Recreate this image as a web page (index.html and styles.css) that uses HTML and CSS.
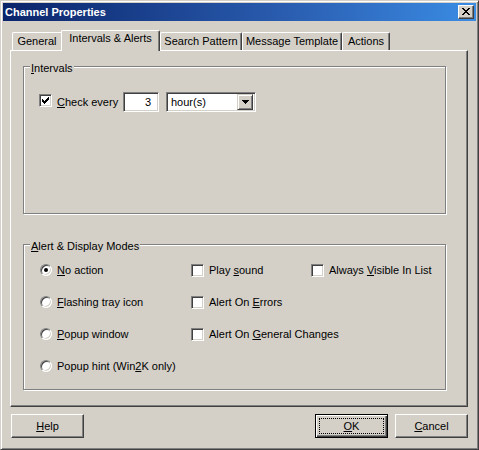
FILE: index.html
```html
<!DOCTYPE html>
<html>
<head>
<meta charset="utf-8">
<title>Channel Properties</title>
<link rel="stylesheet" href="styles.css">
</head>
<body>
<div class="window">
  <div class="titlebar">
    <span class="title">Channel Properties</span>
    <span class="close-btn">
      <svg width="8" height="7" viewBox="0 0 8 7" shape-rendering="crispEdges"><path d="M0 0h2v1H0zM6 0h2v1H6zM1 1h2v1H1zM5 1h2v1H5zM2 2h4v1H2zM3 3h2v1H3zM2 4h4v1H2zM1 5h2v1H1zM5 5h2v1H5zM0 6h2v1H0zM6 6h2v1H6z" fill="#000"/></svg>
    </span>
  </div>
  <div class="client">
    <div class="tabs">
      <div class="tab tab-general tab-before-active">General</div>
      <div class="tab tab-active tab-intervals">Intervals &amp; Alerts</div>
      <div class="tab tab-search">Search Pattern</div>
      <div class="tab tab-message">Message Template</div>
      <div class="tab tab-actions">Actions</div>
    </div>
    <div class="panel">
      <div class="group group-intervals">
        <span class="group-title"><u>I</u>ntervals</span>
        <div class="check-row">
          <span class="checkbox">
            <svg width="7" height="7" viewBox="0 0 7 7" shape-rendering="crispEdges"><path d="M0 2h1v3H0zM1 3h1v3H1zM2 4h1v3H2zM3 3h1v3H3zM4 2h1v3H4zM5 1h1v3H5zM6 0h1v3H6z" fill="#000"/></svg>
          </span>
          <span class="check-label"><u>C</u>heck every</span>
          <span class="field num-field">3</span>
          <span class="field combo">
            <span class="combo-text">hour(s)</span>
            <span class="combo-btn">
              <svg width="7" height="4" viewBox="0 0 7 4" shape-rendering="crispEdges"><path d="M0 0h7v1H0zM1 1h5v1H1zM2 2h3v1H2zM3 3h1v1H3z" fill="#000"/></svg>
            </span>
          </span>
        </div>
      </div>
      <div class="group group-alerts">
        <span class="group-title"><u>A</u>lert &amp; Display Modes</span>
        <div class="alert-grid">
          <div class="opt"><span class="radio checked"></span><span class="opt-label"><u>N</u>o action</span></div>
          <div class="opt"><span class="box"></span><span class="opt-label">Play <u>s</u>ound</span></div>
          <div class="opt"><span class="box"></span><span class="opt-label">Always <u>V</u>isible In List</span></div>

          <div class="opt"><span class="radio"></span><span class="opt-label"><u>F</u>lashing tray icon</span></div>
          <div class="opt"><span class="box"></span><span class="opt-label">Alert On <u>E</u>rrors</span></div>
          <div class="opt empty"></div>

          <div class="opt"><span class="radio"></span><span class="opt-label"><u>P</u>opup window</span></div>
          <div class="opt"><span class="box"></span><span class="opt-label">Alert On <u>G</u>eneral Changes</span></div>
          <div class="opt empty"></div>

          <div class="opt"><span class="radio"></span><span class="opt-label">Popup hint (Win<u>2</u>K only)</span></div>
        </div>
      </div>
    </div>
    <div class="buttons">
      <div class="btn btn-help"><span><u>H</u>elp</span></div>
      <div class="btn btn-ok btn-default"><span><u>O</u>K</span></div>
      <div class="btn btn-cancel"><span><u>C</u>ancel</span></div>
    </div>
  </div>
</div>
</body>
</html>
```

FILE: styles.css
```css
* { box-sizing: border-box; }
html, body { margin: 0; padding: 0; }
body {
  width: 479px;
  height: 450px;
  overflow: hidden;
  background: #d4d0c8;
  font-family: "Liberation Sans", Arial, sans-serif;
  font-size: 11px;
  line-height: 13px;
  color: #000;
}
u { text-decoration: underline; text-underline-offset: 1px; }

.window {
  width: 479px;
  height: 450px;
  background: #d4d0c8;
  border: 1px solid;
  border-color: #d4d0c8 #404040 #404040 #d4d0c8;
  box-shadow: inset 1px 1px #fff, inset -1px -1px #808080;
  padding: 2px;
  display: flex;
  flex-direction: column;
}

.titlebar {
  height: 18px;
  flex: none;
  display: flex;
  align-items: center;
  padding-left: 2px;
  background: linear-gradient(to right, #0a246a 0%, #2a5db0 60%, #3a8ce4 100%);
}
.title {
  color: #fff;
  font-weight: bold;
  font-size: 11px;
}
.close-btn {
  margin-left: auto;
  margin-right: 2px;
  width: 16px;
  height: 14px;
  background: #d4d0c8;
  border: 1px solid;
  border-color: #fff #404040 #404040 #fff;
  box-shadow: inset -1px -1px #808080;
  display: flex;
  align-items: center;
  justify-content: center;
  padding: 0 0 1px 0;
}
.close-btn svg { display: block; }

.client {
  flex: 1;
  padding: 9px 8px 0 7px;
  display: flex;
  flex-direction: column;
}

.tabs {
  display: flex;
  align-items: flex-end;
  height: 20px;
  padding-left: 2px;
  position: relative;
  z-index: 2;
}
.tab {
  height: 18px;
  border-top: 1px solid #fff;
  border-left: 1px solid #fff;
  border-right: 1px solid #404040;
  box-shadow: inset -1px 0 #808080;
  border-top-left-radius: 2px;
  border-top-right-radius: 2px;
  text-align: center;
  padding-top: 2px;
  white-space: nowrap;
  background: #d4d0c8;
}
.tab-before-active { border-right: 0; box-shadow: none; border-top-right-radius: 0; }
.tab-general { width: 49px; }
.tab-intervals { width: 99px; }
.tab-search { width: 82px; }
.tab-message { width: 100px; }
.tab-actions { width: 48px; }
.tab-active {
  height: 21px;
  margin-bottom: -1px;
  padding-top: 1px;
}

.panel {
  width: 458px;
  height: 357px;
  flex: none;
  border: 1px solid;
  border-color: #fff #404040 #404040 #fff;
  box-shadow: inset -1px -1px #808080;
  padding: 15px 21px 0 12px;
  position: relative;
  z-index: 1;
}

.group {
  position: relative;
  border: 1px solid #808080;
  box-shadow: inset 1px 1px #fff, 1px 1px #fff;
}
.group-title {
  position: absolute;
  top: -5px;
  left: 6px;
  padding: 0 1px;
  background: #d4d0c8;
  white-space: nowrap;
}
.group-intervals {
  height: 148px;
  padding: 25px 0 0 15px;
}
.group-alerts {
  height: 146px;
  margin-top: 30px;
  padding: 9px 0 0 16px;
}

.check-row {
  display: flex;
  align-items: center;
  height: 20px;
}
.checkbox, .box {
  width: 13px;
  height: 13px;
  flex: none;
  background: #fff;
  border: 1px solid;
  border-color: #808080 #fff #fff #808080;
  box-shadow: inset 1px 1px #404040, inset -1px -1px #d4d0c8;
  display: flex;
  align-items: center;
  justify-content: center;
}
.checkbox { margin-top: -3px; }
.checkbox svg { display: block; }
.check-label {
  width: 66px;
  margin-left: 5px;
  white-space: nowrap;
}
.field {
  height: 20px;
  background: #fff;
  border: 1px solid;
  border-color: #808080 #fff #fff #808080;
  box-shadow: inset 1px 1px #404040, inset -1px -1px #d4d0c8;
}
.num-field {
  width: 36px;
  text-align: right;
  padding: 3px 7px 0 0;
}
.combo {
  width: 90px;
  margin-left: 7px;
  display: flex;
  align-items: center;
  padding: 2px;
}
.combo-text {
  flex: 1;
  padding-left: 2px;
}
.combo-btn {
  width: 16px;
  height: 16px;
  background: #d4d0c8;
  border: 1px solid;
  border-color: #d4d0c8 #404040 #404040 #d4d0c8;
  box-shadow: inset 1px 1px #fff, inset -1px -1px #808080;
  display: flex;
  align-items: center;
  justify-content: center;
}
.combo-btn svg { display: block; }

.alert-grid {
  display: grid;
  grid-template-columns: 151px 120px auto;
  grid-auto-rows: 32px;
}
.opt {
  display: flex;
  align-items: center;
  white-space: nowrap;
}
.radio {
  width: 12px;
  height: 12px;
  flex: none;
  border-radius: 50%;
  background: #fff;
  border: 1px solid;
  border-color: #808080 #fff #fff #808080;
  box-shadow: inset 1px 1px #404040, inset -1px -1px #d4d0c8;
  position: relative;
}
.radio.checked::after {
  content: "";
  position: absolute;
  left: 3px;
  top: 3px;
  width: 4px;
  height: 4px;
  border-radius: 50%;
  background: #000;
}
.opt-label { margin-left: 5px; }
.opt .radio + .opt-label { margin-left: 5px; }

.buttons {
  display: flex;
  margin-top: 7px;
}
.btn {
  width: 73px;
  height: 24px;
  border: 1px solid;
  border-color: #fff #404040 #404040 #fff;
  box-shadow: inset -1px -1px #808080;
  display: flex;
  align-items: center;
  justify-content: center;
  position: relative;
}
.btn-help { margin-left: 1px; }
.btn-ok { margin-left: auto; }
.btn-cancel { margin-left: 7px; }
.btn-default {
  border-color: #000;
  box-shadow: inset 1px 1px #fff, inset -1px -1px #404040, inset -2px -2px #808080;
}
.btn-default::after {
  content: "";
  position: absolute;
  left: 3px;
  top: 3px;
  right: 3px;
  bottom: 3px;
  border: 1px dotted #000;
}
```
